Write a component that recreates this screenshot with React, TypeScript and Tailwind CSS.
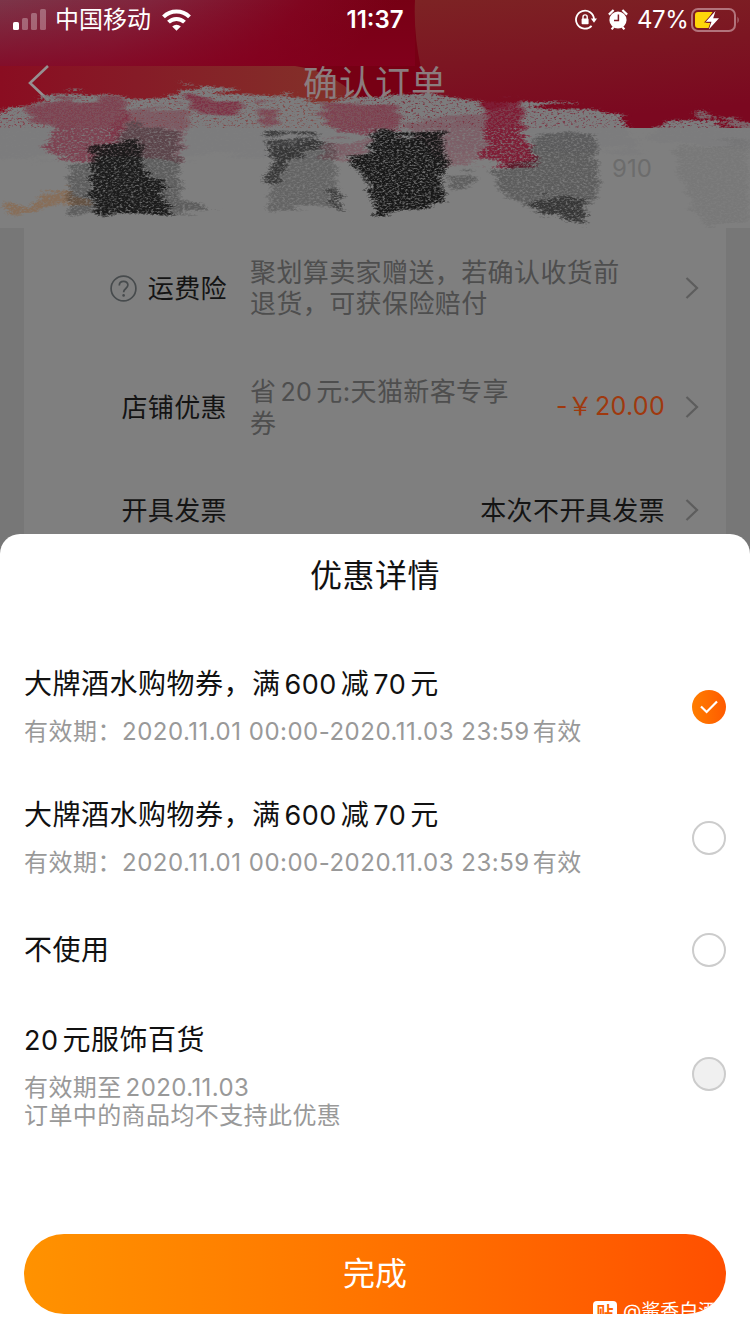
import type { ReactNode } from 'react';
import clsx from 'clsx';

type Stroke = { color: string; opacity: number; d: string };

const coupons = [
  {
    id: 1,
    title: ['大牌酒水购物券，满', '600', '减', '70', '元'],
    validity: ['有效期：', '2020.11.01 00:00-2020.11.03 23:59', '有效'],
    state: 'checked',
  },
  {
    id: 2,
    title: ['大牌酒水购物券，满', '600', '减', '70', '元'],
    validity: ['有效期：', '2020.11.01 00:00-2020.11.03 23:59', '有效'],
    state: 'empty',
  },
];

// hand-scribbled strokes over the address block
const strokes: Stroke[] = [
  { color: 'gray', opacity: 1, d: 'M-20 116 L30 104 L60 92 L180 100 L182 86 L270 96 L330 100 L390 94 L480 98 L490 108 L520 102 L600 110 L625 120 L640 150 L-20 160Z' },
  { color: 'gray', opacity: 1, d: 'M675 117 L720 124 L760 130 L760 150 L640 140Z' },
  { color: 'gray', opacity: 0.8, d: 'M690 110 L760 124 L760 130 L696 116Z' },
  { color: 'pink', opacity: 0.6, d: 'M20 104 L125 96 L128 130 L98 160 L60 162 L40 146 L56 128 L24 116Z' },
  { color: 'pink', opacity: 0.35, d: 'M120 110 L190 106 L182 160 L100 156Z' },
  { color: 'pink', opacity: 0.75, d: 'M180 94 L245 102 L236 116 L196 112Z' },
  { color: 'pink', opacity: 0.55, d: 'M255 102 L280 104 L276 126 L258 124Z' },
  { color: 'pink', opacity: 0.6, d: 'M318 102 L400 104 L402 134 L340 132 L320 114Z' },
  { color: 'pink', opacity: 0.3, d: 'M320 140 L375 140 L365 164 L320 156Z' },
  { color: 'pink', opacity: 0.3, d: 'M400 120 L500 115 L485 168 L440 166Z' },
  { color: 'pink', opacity: 1, d: 'M485 100 L520 102 L526 132 L540 166 L480 164 L482 130Z' },
  { color: 'orange', opacity: 0.65, d: 'M0 200 L30 206 L40 194 L70 186 L100 208 L50 206 L8 220Z' },
  { color: 'black', opacity: 0.32, d: 'M66 168 L100 156 L130 124 L180 130 L182 196 L228 214 L70 214Z' },
  { color: 'black', opacity: 0.95, d: 'M90 144 L142 142 L144 172 L164 178 L166 196 L174 210 L172 216 L96 216 L90 196Z' },
  { color: 'black', opacity: 0.4, d: 'M164 190 L182 192 L182 198 L164 198Z' },
  { color: 'black', opacity: 0.6, d: 'M262 134 L320 134 L322 148 L292 160 L280 184 L262 182 L272 160Z' },
  { color: 'black', opacity: 0.25, d: 'M270 146 L335 140 L344 210 L268 210Z' },
  { color: 'black', opacity: 0.5, d: 'M330 188 L344 190 L342 212 L330 210Z' },
  { color: 'black', opacity: 1, d: 'M366 132 L445 132 L445 146 L450 164 L442 184 L448 196 L430 210 L380 214 L366 200 L362 176 L346 160 L372 150Z' },
  { color: 'black', opacity: 0.3, d: 'M446 176 L474 172 L474 184 L450 192Z' },
  { color: 'black', opacity: 0.32, d: 'M488 170 L530 156 L536 130 L598 134 L600 190 L586 222 L540 214 L500 194Z' },
  { color: 'black', opacity: 0.55, d: 'M550 194 L588 196 L586 224 L548 216 L526 204Z' },
  { color: 'black', opacity: 0.06, d: 'M672 150 L750 136 L750 220 L710 232 L690 208Z' },
];

const grains = [
  { id: 'gray', hex: '#7c7c7d', bias: -1.0 },
  { id: 'pink', hex: '#7e1d35', bias: -1.25 },
  { id: 'black', hex: '#181818', bias: -1.25 },
  { id: 'orange', hex: '#8c6545', bias: -1.15 },
];

function Scribble() {
  return (
    <svg className="absolute inset-0" width="750" height="240" viewBox="0 0 750 240" aria-hidden="true">
      <defs>
        {grains.map(g => (
          <filter key={g.id} id={`grain-${g.id}`} x="-20" y="70" width="790" height="170" filterUnits="userSpaceOnUse" colorInterpolationFilters="sRGB">
            <feTurbulence type="fractalNoise" baseFrequency="0.02 0.2" numOctaves="3" seed="4" result="wave" />
            <feDisplacementMap in="SourceAlpha" in2="wave" scale="22" xChannelSelector="R" yChannelSelector="G" result="rough" />
            <feGaussianBlur in="rough" stdDeviation="3 1.2" result="soft" />
            <feTurbulence type="fractalNoise" baseFrequency="0.35 0.6" numOctaves="3" seed="9" />
            <feColorMatrix values="0 0 0 0 0  0 0 0 0 0  0 0 0 0 0  2.4 0 0 0 -0.5" result="noise" />
            <feComposite in="soft" in2="noise" operator="arithmetic" k2="1.4" k3="1" k4={g.bias} result="mask" />
            <feFlood floodColor={g.hex} />
            <feComposite in2="mask" operator="in" />
          </filter>
        ))}
      </defs>
      {strokes.map((s, i) => (
        <g key={i} opacity={s.opacity}>
          <path d={s.d} filter={`url(#grain-${s.color})`} />
        </g>
      ))}
    </svg>
  );
}

function HeaderArt() {
  return (
    <svg className="absolute inset-0" width="750" height="128" viewBox="0 0 750 128" aria-hidden="true">
      <defs>
        <linearGradient id="base" x1="0" x2="1" y1="0" y2="0.15">
          <stop offset="0" stopColor="#7c3549" />
          <stop offset="0.2" stopColor="#81243c" />
          <stop offset="0.4" stopColor="#80051f" />
          <stop offset="0.52" stopColor="#770014" />
        </linearGradient>
        <linearGradient id="ball" x1="0" x2="0.25" y1="0" y2="1">
          <stop offset="0" stopColor="#7d2324" />
          <stop offset="1" stopColor="#7b0820" />
        </linearGradient>
        <linearGradient id="shade" x1="0" x2="0" y1="0" y2="1">
          <stop offset="0" stopColor="#85001f" stopOpacity="0" />
          <stop offset="1" stopColor="#85001f" stopOpacity="0.7" />
        </linearGradient>
        <linearGradient id="band">
          <stop offset="0" stopColor="#8a0d21" />
          <stop offset="0.35" stopColor="#861b27" />
          <stop offset="0.85" stopColor="#833029" />
          <stop offset="1" stopColor="#7a1020" />
        </linearGradient>
      </defs>
      <rect width="750" height="128" fill="url(#base)" />
      <rect width="415" height="66" fill="url(#shade)" />
      <path d="M415 0 H750 V128 H440 Q412 60 415 0Z" fill="url(#ball)" />
      <path d="M0 66 H295 Q345 72 385 128 H0Z" fill="url(#band)" />
    </svg>
  );
}

function StatusBar() {
  return (
    <div className="relative h-10 flex items-center text-white">
      <svg className="ml-3 shrink-0" width="36" height="24" viewBox="0 0 36 24" fill="#fff">
        <rect x="1" y="14" width="6" height="8" rx="1.6" />
        <rect x="10" y="10" width="6" height="12" rx="1.6" opacity=".3" />
        <rect x="19" y="5" width="6" height="17" rx="1.6" opacity=".3" />
        <rect x="28" y="1" width="6" height="21" rx="1.6" opacity=".3" />
      </svg>
      <span className="ml-[7px] w-24 text-2xl leading-10 whitespace-nowrap">中国移动</span>
      <svg className="ml-[10px] shrink-0" width="31" height="24" viewBox="0 0 31 24" fill="none" stroke="#fff" strokeWidth="4">
        <path d="M2.5 8.8a18.5 18.5 0 0 1 26 0" />
        <path d="M7.5 14.2a11.4 11.4 0 0 1 16 0" />
        <path d="M15.5 22.8 11.2 18.4a6.2 6.2 0 0 1 8.6 0Z" fill="#fff" stroke="none" />
      </svg>
      <span className="absolute left-1/2 -translate-x-1/2 text-2xl font-semibold leading-10">11:37</span>
      <div className="ml-auto flex items-center">
        <svg width="22" height="22" viewBox="0 0 22 22" fill="none" stroke="#fff" strokeWidth="1.8">
          <path d="M19 10.2A9 9 0 1 0 16.6 16.8" />
          <path d="M15.8 9.6h6.2l-3 4.2z" fill="#fff" stroke="none" />
          <rect x="6.6" y="9.6" width="7" height="5.6" rx=".8" fill="#fff" stroke="none" />
          <path d="M8 10V8a2.1 2.1 0 0 1 4.2 0v2" strokeWidth="1.4" />
        </svg>
        <svg className="ml-[11px]" width="20" height="22" viewBox="0 0 20 22">
          <circle cx="10" cy="11" r="8.6" fill="#fff" />
          <path d="M.9 5.6 5.6 1M19.1 5.6 14.4 1M3.6 20.4l2-2.4M16.4 20.4l-2-2.4" stroke="#fff" strokeWidth="2.2" />
          <path d="M10.4 5.5v6H6" fill="none" stroke="#7d1b25" strokeWidth="1.5" />
        </svg>
        <span className="ml-[9px] w-[54px] text-2xl leading-10 tracking-[-0.4px]">47%</span>
        <svg width="50" height="26" viewBox="0 0 50 26">
          <rect x="1" y="2" width="43" height="22" rx="6" fill="none" stroke="#b2747c" strokeWidth="2" />
          <path d="M46.5 9.5q2.5 3.500 0 7z" fill="#b2747c" />
          <path d="M7 5h14.500L15 16h5l-2 5H7q-3 0-3-3V8q0-3 3-3z" fill="#ffd60a" />
          <path d="M24.5 4 14.800 14.800h5.700L17.800 22.500 28 11.200h-5.800z" fill="#fff" stroke="#7b1424" strokeWidth="1.6" paintOrder="stroke" />
        </svg>
        <span className="w-[9px]" />
      </div>
    </div>
  );
}

function Chevron() {
  return (
    <svg className="ml-[20px] mr-[27px] shrink-0" width="14" height="24" viewBox="0 0 14 24" fill="none" stroke="#5d5d5d" strokeWidth="2.2">
      <path d="M1.500 2 12 12 1.500 22" />
    </svg>
  );
}

function OrderRow({ label, help, desc, value, className }: { label: string; help?: boolean; desc?: ReactNode; value?: ReactNode; className: string }) {
  return (
    <div className={clsx('flex shrink-0 items-center', className)}>
      <div className="flex w-[203px] shrink-0 items-center justify-end">
        {help && (
          <svg className="mr-[11px]" width="27" height="27" viewBox="0 0 27 27" fill="none" stroke="#474b4d" strokeWidth="1.7">
            <circle cx="13.5" cy="13.5" r="12.400" />
            <path d="M9.300 10.500c0-5.400 8.600-5.400 8.600-.4 0 3.400-4.300 3.400-4.300 7.200" />
            <circle cx="13.600" cy="20.400" r="1.300" fill="#474b4d" stroke="none" />
          </svg>
        )}
        <span className="text-[26px] tracking-[0.4px] text-[#141414]">{label}</span>
      </div>
      <div className="ml-[23px] whitespace-nowrap text-[26px] leading-[31px] tracking-[0.4px] text-[#4e4e4e]">{desc}</div>
      <div className="ml-auto">{value}</div>
      <Chevron />
    </div>
  );
}

function Radio({ state }: { state: string }) {
  if (state === 'checked') {
    return (
      <span className="flex size-[34px] shrink-0 items-center justify-center rounded-full bg-linear-to-r from-[#ff7d00] to-[#ff5a00]">
        <svg width="20" height="16" viewBox="0 0 20 16" fill="none" stroke="#fff" strokeWidth="2.2">
          <path d="M2 7.500 7.600 13 18 2.500" />
        </svg>
      </span>
    );
  }
  return (
    <span className={clsx('size-[34px] shrink-0 rounded-full border-2 border-[#ccc]', state === 'disabled' && 'bg-[#f0f0f0]')} />
  );
}

export default function App() {
  return (
    <div className="relative h-[1334px] w-[750px] overflow-hidden bg-[#777] font-[Inter,'Noto_Sans_CJK_SC',sans-serif]" lang="zh-CN">
      <div className="relative flex h-[554px] flex-col overflow-hidden">
        <HeaderArt />
        <StatusBar />
        <div className="relative flex h-[88px] items-center">
          <svg className="ml-7" width="22" height="38" viewBox="0 0 22 38" fill="none" stroke="#969092" strokeWidth="2.600">
            <path d="M20 2 2 19 20 36" />
          </svg>
          <h1 className="absolute inset-x-0 text-center text-[35px] tracking-[1px] text-[#8b7c7e]">确认订单</h1>
        </div>
        <div className="h-[102px] shrink-0 bg-[#7f7f7f] pl-[612px] pt-[27px] text-2xl text-[#6c6c6c]">910</div>
        <Scribble />
        <div className="relative mx-6 flex flex-col bg-[#7f7f7f]">
          <OrderRow
            className="h-[120px]"
            label="运费险"
            help
            desc={<>聚划算卖家赠送，若确认收货前<br />退货，可获保险赔付</>}
          />
          <OrderRow
            className="h-[118px]"
            label="店铺优惠"
            desc={<>省<span className="mx-[4px] text-[25px]">20</span>元:天猫新客专享<br />券</>}
            value={<span className="whitespace-pre text-[25px] tracking-[0.3px] text-[#9f390e]">-￥<span className="ml-[2px]">20.00</span></span>}
          />
          <OrderRow
            className="h-[88px]"
            label="开具发票"
            value={<span className="text-[26px] tracking-[0.4px] text-[#141414]">本次不开具发票</span>}
          />
        </div>
      </div>

      <div className="relative -mt-5 flex h-[800px] flex-col rounded-t-[20px] bg-white px-6">
        <h2 className="mt-[18px] h-12 text-center text-[32px] leading-[48px] tracking-[0.5px] text-[#111]">优惠详情</h2>

        {coupons.map((c, i) => (
          <div key={c.id} className={clsx('flex items-center', i === 0 ? 'mt-[62px]' : 'mt-[41px]')}>
            <div className="h-[90px] flex-1 whitespace-nowrap">
              <div className="text-[28px] leading-[44px] tracking-[0.5px] text-[#111]">
                {c.title[0]}<span className="mx-[4px] text-[27px]">{c.title[1]}</span>{c.title[2]}
                <span className="mx-[4px] text-[27px]">{c.title[3]}</span>{c.title[4]}
              </div>
              <div className="mt-[4px] text-2xl leading-[42px] tracking-[0.5px] text-[#999]">
                {c.validity[0]}{c.validity[1]}<span className="ml-[3px]">{c.validity[2]}</span>
              </div>
            </div>
            <Radio state={c.state} />
          </div>
        ))}

        <div className="mt-[45px] flex h-11 items-center justify-between">
          <div className="text-[28px] tracking-[0.5px] text-[#111]">不使用</div>
          <Radio state="empty" />
        </div>

        <div className="mt-[46px] flex items-center justify-between">
          <div>
            <div className="text-[28px] leading-[44px] tracking-[0.5px] text-[#111]">
              <span className="mr-[4px] text-[27px]">20</span>元服饰百货
            </div>
            <div className="mt-[11px] text-2xl leading-[28px] tracking-[0.4px] text-[#999]">
              有效期至<span className="ml-[4px]">2020.11.03</span>
              <br />
              订单中的商品均不支持此优惠
            </div>
          </div>
          <Radio state="disabled" />
        </div>

        <button className="relative mt-auto mb-5 flex h-20 shrink-0 items-center justify-center overflow-hidden rounded-full bg-linear-to-r from-[#ff9200] to-[#ff4f00] text-[32px] text-white">
          完成
          <span className="absolute left-[569px] top-[66px] flex items-start whitespace-nowrap">
            <span className="mt-px flex h-6 w-6 items-center justify-center rounded bg-white text-[17px] font-bold leading-6 text-[#f60]">贴</span>
            <span className="ml-[6px] text-[19px] leading-6">@酱香白酒</span>
          </span>
        </button>
      </div>
    </div>
  );
}
